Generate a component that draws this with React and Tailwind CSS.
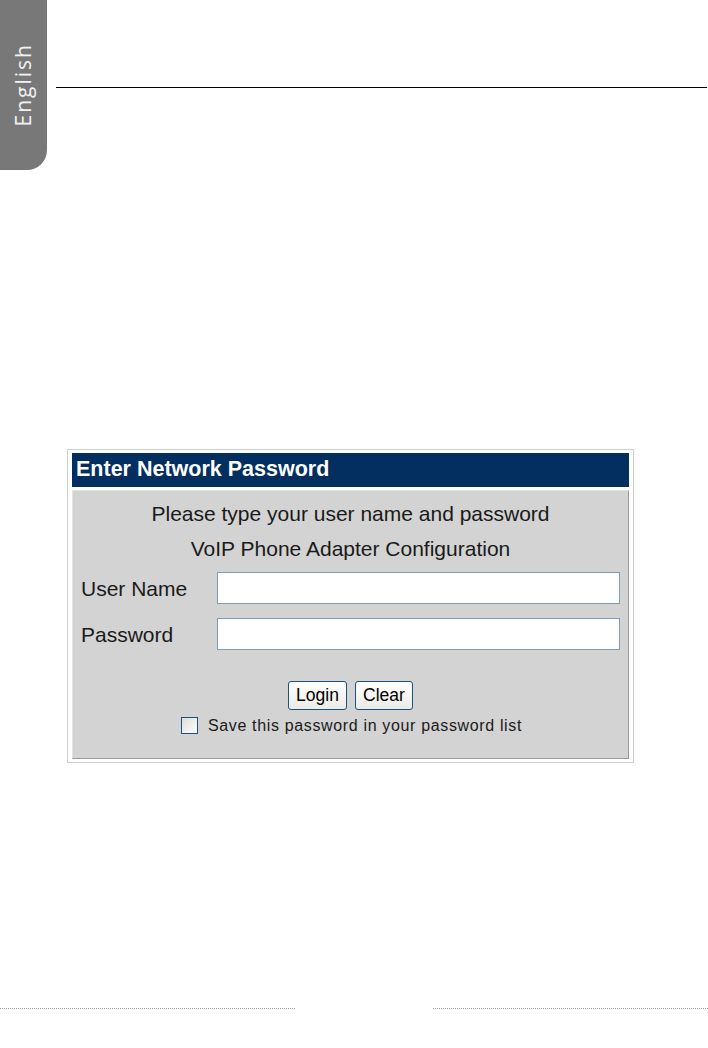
import React from "react";

export default function App() {
  return (
    <div className="w-[708px] h-[1048px] bg-white overflow-hidden relative" style={{ fontFamily: '"Liberation Sans", Arial, sans-serif' }}>
      {/* Top: language tab + rule */}
      <div className="flex">
        <div className="w-[47px] h-[170px] bg-[#787878] rounded-br-[20px] flex items-center justify-center shrink-0">
          <span
            className="[writing-mode:vertical-rl] rotate-180 text-[21px] tracking-[2px] text-[#f2f2f2] leading-none"
            style={{ fontFamily: '"Open Sans", "Noto Sans", sans-serif' }}
          >
            English
          </span>
        </div>
        <div className="flex-1 pt-[87px] pl-[9px] pr-[1px]">
          <div className="border-t-[1.5px] border-black" />
        </div>
      </div>

      {/* Dialog */}
      <div className="mt-[279px] ml-[67px] w-[567px] h-[314px] border border-[#cfcfcf] pt-[3px] px-[4px] pb-[3px] flex flex-col">
        <div className="h-[34px] bg-[#022f5f] flex items-center pl-[4px]">
          <span className="text-white font-bold text-[21.5px] leading-none">Enter Network Password</span>
        </div>
        <div className="mt-[3px] flex-1 bg-[#d3d3d3] border-t border-l border-t-[#e2e2e2] border-l-[#e2e2e2] border-r border-b border-r-[#9a9a9a] border-b-[#9a9a9a] flex flex-col text-[#1a1a1a]">
          <div className="pt-[10px] text-center text-[21px] leading-[25px]">Please type your user name and password</div>
          <div className="mt-[10px] text-center text-[21px] leading-[25px]">VoIP Phone Adapter Configuration</div>
          <div className="mt-[11px] flex items-center pl-[8px] pr-[8px]">
            <span className="w-[136px] text-[21px] leading-none">User Name</span>
            <div className="flex-1 h-[32px] bg-white border border-[#7f9db9]" />
          </div>
          <div className="mt-[14px] flex items-center pl-[8px] pr-[8px]">
            <span className="w-[136px] text-[21px] leading-none">Password</span>
            <div className="flex-1 h-[32px] bg-white border border-[#7f9db9]" />
          </div>
          <div className="mt-[31px] flex justify-center gap-[8px]">
            <div className="w-[59px] h-[29px] rounded-[3px] border border-[#1c5180] bg-gradient-to-b from-[#ffffff] to-[#ecebe6] flex items-center justify-center text-[17.5px] text-black">Login</div>
            <div className="w-[58px] h-[29px] rounded-[3px] border border-[#1c5180] bg-gradient-to-b from-[#ffffff] to-[#ecebe6] flex items-center justify-center text-[17.5px] text-black">Clear</div>
          </div>
          <div className="mt-[7px] flex justify-center items-center gap-[10px] pl-[2px]">
            <div className="w-[17px] h-[17px] border border-[#1c5180] bg-gradient-to-br from-[#dcdcd7] to-[#ffffff]" />
            <span className="text-[16px] tracking-[0.65px] leading-none">Save this password in your password list</span>
          </div>
        </div>
      </div>

      {/* Footer dotted rules */}
      <div className="mt-[245px] flex">
        <div className="w-[295px] border-t border-dotted border-[#9a9a9a]" />
        <div className="w-[138px]" />
        <div className="flex-1 border-t border-dotted border-[#9a9a9a]" />
      </div>
    </div>
  );
}
